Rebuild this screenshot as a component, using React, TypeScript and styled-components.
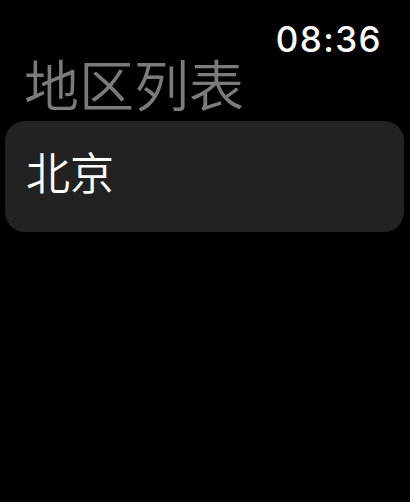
import React from "react";
import styled, { createGlobalStyle } from "styled-components";

const GlobalStyle = createGlobalStyle`
  html, body {
    margin: 0;
    padding: 0;
    background: #000;
    width: 410px;
    height: 502px;
    overflow: hidden;
  }
  * { box-sizing: border-box; }
`;

const Screen = styled.div`
  width: 410px;
  height: 502px;
  background: #000;
  display: flex;
  flex-direction: column;
  font-family: "Noto Sans CJK SC", "Noto Sans", sans-serif;
`;

const StatusBar = styled.div`
  display: flex;
  justify-content: flex-end;
  padding: 19px 28px 0 0;
  height: 58px;
`;

const Clock = styled.span`
  font-family: Inter, "Liberation Sans", sans-serif;
  font-size: 35px;
  font-weight: 500;
  line-height: 40px;
  letter-spacing: 1.4px;
  color: #fff;
`;

const Title = styled.h1`
  margin: -6px 0 0 0;
  padding: 0 0 0 24px;
  font-size: 55px;
  font-weight: 350;
  line-height: 60px;
  color: #7b7b7b;
`;

const List = styled.div`
  display: flex;
  flex-direction: column;
  padding: 9px 6px 0 5px;
`;

const Row = styled.div`
  height: 111px;
  border-radius: 20px;
  background: #222222;
  display: flex;
  align-items: center;
  padding-left: 21px;
`;

const RowLabel = styled.span`
  font-size: 44px;
  font-weight: 350;
  line-height: 50px;
  color: #fff;
  margin-top: -12px;
`;

export default function App() {
  return (
    <>
      <GlobalStyle />
      <Screen>
        <StatusBar>
          <Clock>08:36</Clock>
        </StatusBar>
        <Title>地区列表</Title>
        <List>
          <Row>
            <RowLabel>北京</RowLabel>
          </Row>
        </List>
      </Screen>
    </>
  );
}
